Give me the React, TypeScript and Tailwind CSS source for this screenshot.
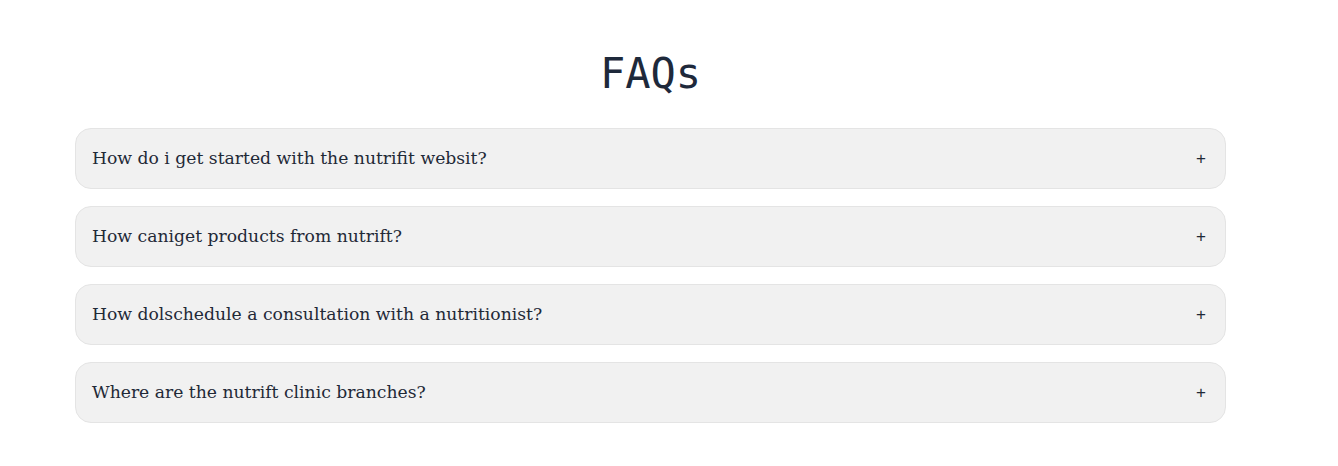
import React, { useState } from 'react';

const faqs = [
  'How do i get started with the nutrifit websit?',
  'How caniget products from nutrift?',
  'How dolschedule a consultation with a nutritionist?',
  'Where are the nutrift clinic branches?',
];

export default function App() {
  const [open, setOpen] = useState<number | null>(null);

  return (
    <main className="min-h-screen bg-white">
      <div className="w-[1301px] pt-[46px]">
        <h1 className="text-center text-[42px] leading-[56px] text-[#1e293b] font-['DejaVu_Sans_Mono',monospace]">
          FAQs
        </h1>

        {/* Accordion */}
        <div className="mx-auto mt-[26px] flex w-[1151px] flex-col gap-[17px]">
          {faqs.map((q, i) => (
            <div
              key={q}
              className="rounded-[16px] border border-[#e4e4e4] bg-[#f1f1f1]"
            >
              <button
                onClick={() => setOpen(open === i ? null : i)}
                className="flex h-[59px] w-full items-center justify-between pl-[16px] pr-[19px] text-left"
              >
                <span className="text-[17.2px] text-[#1f2937] font-['DejaVu_Serif',serif]">
                  {q}
                </span>
                <span className="text-[17px] text-[#1f2937] font-['Liberation_Sans',sans-serif]">
                  {open === i ? '−' : '+'}
                </span>
              </button>
            </div>
          ))}
        </div>
      </div>
    </main>
  );
}
